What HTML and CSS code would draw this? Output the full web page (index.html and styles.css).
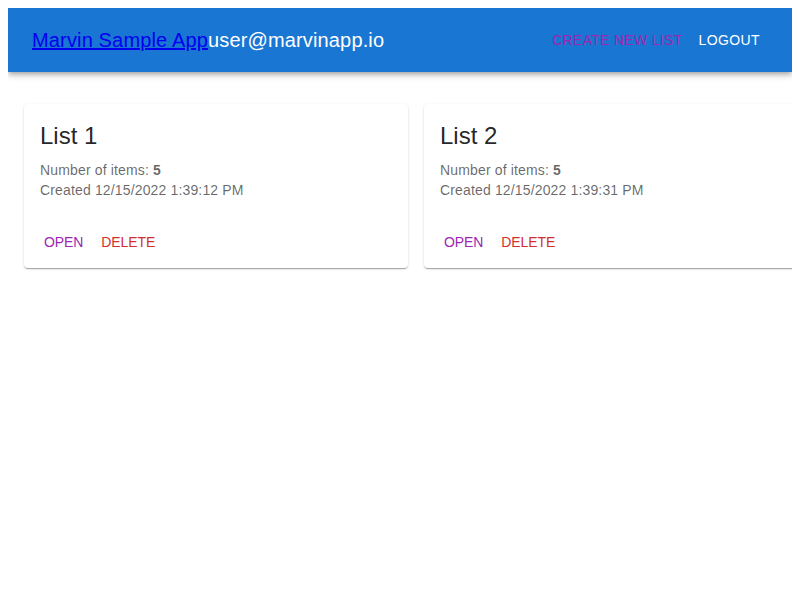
FILE: index.html
```html
<!DOCTYPE html>
<html>
<head>
<meta charset="utf-8">
<title>Marvin Sample App</title>
<link rel="stylesheet" href="styles.css">
</head>
<body>
<header class="appbar">
  <div class="toolbar">
    <div class="brand">
      <a href="#" class="brand-link">Marvin Sample App</a><span class="user">user@marvinapp.io</span>
    </div>
    <button class="btn btn-create">Create new list</button>
    <button class="btn btn-logout">Logout</button>
  </div>
</header>
<main class="lists">
  <section class="card">
    <div class="card-content">
      <h2 class="card-title">List 1</h2>
      <p class="card-text">Number of items: <b>5</b></p>
      <p class="card-text">Created 12/15/2022 1:39:12 PM</p>
    </div>
    <div class="card-actions">
      <button class="btn btn-small btn-open">Open</button>
      <button class="btn btn-small btn-delete">Delete</button>
    </div>
  </section>
  <section class="card">
    <div class="card-content">
      <h2 class="card-title">List 2</h2>
      <p class="card-text">Number of items: <b>5</b></p>
      <p class="card-text">Created 12/15/2022 1:39:31 PM</p>
    </div>
    <div class="card-actions">
      <button class="btn btn-small btn-open">Open</button>
      <button class="btn btn-small btn-delete">Delete</button>
    </div>
  </section>
</main>
</body>
</html>
```

FILE: styles.css
```css
html {
  overflow: hidden;
}
body {
  margin: 8px;
  font-family: "Liberation Sans", Arial, Helvetica, sans-serif;
  background: #fff;
}
.appbar {
  background: #1976d2;
  color: #fff;
  box-shadow: 0px 2px 4px -1px rgba(0,0,0,0.2), 0px 4px 5px 0px rgba(0,0,0,0.14), 0px 1px 10px 0px rgba(0,0,0,0.12);
}
.toolbar {
  display: flex;
  align-items: center;
  min-height: 64px;
  padding: 0 24px;
}
.brand {
  flex-grow: 1;
  font-size: 20px;
  line-height: 32px;
  letter-spacing: 0.0075em;
}
.brand-link {
  color: #0000ee;
  text-decoration: underline;
}
.user {
  color: #fff;
}
.btn {
  font-family: inherit;
  font-size: 14px;
  line-height: 24px;
  letter-spacing: 0.3px;
  text-transform: uppercase;
  background: transparent;
  border: 0;
  padding: 6px 8px;
  cursor: pointer;
}
.btn-small {
  letter-spacing: -0.1px;
  padding: 6px 5px;
}
.btn-create {
  color: #9c27b0;
}
.btn-logout {
  color: #fff;
  letter-spacing: 0.4px;
}
.lists {
  display: flex;
  gap: 16px;
  padding: 32px 0 6px 16px;
  margin-right: -8px;
  overflow: hidden;
}
.card {
  flex: 0 0 384px;
  width: 384px;
  background: #fff;
  border-radius: 4px;
  box-shadow: 0px 2px 1px -1px rgba(0,0,0,0.2), 0px 1px 1px 0px rgba(0,0,0,0.14), 0px 1px 3px 0px rgba(0,0,0,0.12);
  color: rgba(0,0,0,0.87);
}
.card-content {
  padding: 16px;
}
.card-title {
  margin: 0 0 8px;
  font-size: 24px;
  font-weight: 400;
  line-height: 32px;
}
.card-text {
  margin: 0;
  font-size: 14px;
  line-height: 20px;
  letter-spacing: 0.01071em;
  color: rgba(0,0,0,0.6);
}
.card-actions {
  display: flex;
  align-items: center;
  gap: 8px;
  padding: 8px 8px 8px 15px;
}
.btn-open {
  color: #9c27b0;
}
.btn-delete {
  color: #d32f2f;
}
```
